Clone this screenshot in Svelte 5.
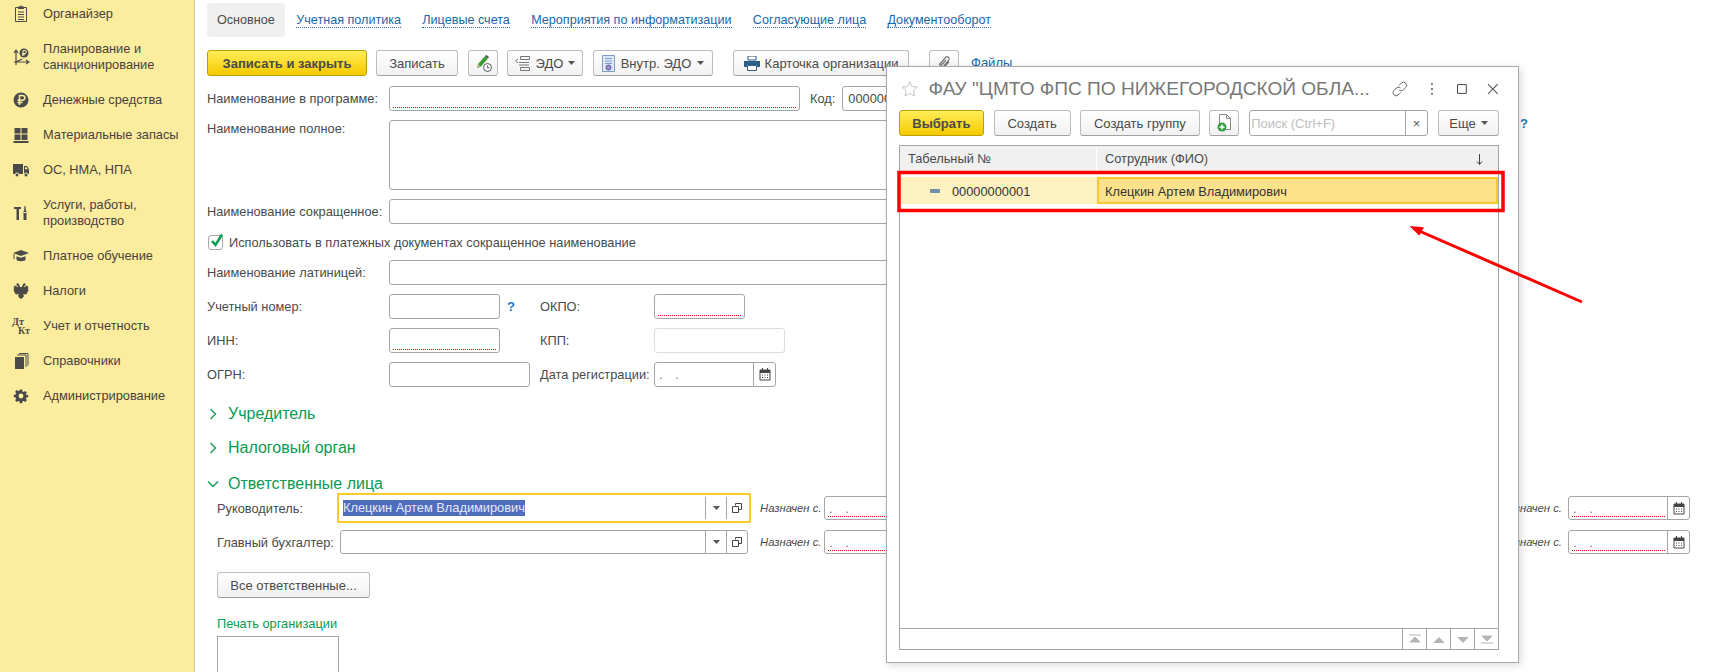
<script>
    const menu = [
        { id: 'org', lines: ['Органайзер'] },
        { id: 'plan', lines: ['Планирование и', 'санкционирование'] },
        { id: 'rub', lines: ['Денежные средства'] },
        { id: 'mat', lines: ['Материальные запасы'] },
        { id: 'truck', lines: ['ОС, НМА, НПА'] },
        { id: 'tools', lines: ['Услуги, работы,', 'производство'] },
        { id: 'cap', lines: ['Платное обучение'] },
        { id: 'tax', lines: ['Налоги'] },
        { id: 'dtkt', lines: ['Учет и отчетность'] },
        { id: 'books', lines: ['Справочники'] },
        { id: 'gear', lines: ['Администрирование'] }
    ]

    const tabs = [
        'Учетная политика',
        'Лицевые счета',
        'Мероприятия по информатизации',
        'Согласующие лица',
        'Документооборот'
    ]
</script>

{#snippet caret()}
    <svg class="caret" width="7" height="4" viewBox="0 0 7 4"><path d="M0 0h7L3.5 4z" fill="#555" /></svg>
{/snippet}

{#snippet calendar()}
    <svg width="12" height="13" viewBox="0 0 12 13">
        <path d="M1 2h10v10H1z" fill="none" stroke="#444" />
        <path d="M1 2h10v3H1zM3 0h1v3H3zM8 0h1v3H8z" fill="#444" />
        <path d="M3 6.500h1v1H3zM5.500 6.500h1v1h-1zM8 6.500h1v1H8zM3 9h1v1H3zM5.500 9h1v1h-1zM8 9h1v1H8z" fill="#444" />
    </svg>
{/snippet}

{#snippet date(width)}
    <div class="field req date" style="width: {width}px">
        <span class="mask">  .   .</span>
        <span class="side">{@render calendar()}</span>
    </div>
{/snippet}

{#snippet pick()}
    <span class="pick"><svg width="7" height="4" viewBox="0 0 7 4"><path d="M0 0h7L3.500 4z" fill="#555" /></svg></span>
    <span class="pick">
        <svg width="10" height="10" viewBox="0 0 10 10">
            <path d="M3.500 2.500V.5h6v6H7M.5 3.500h6v6h-6z" fill="none" stroke="#444" />
        </svg>
    </span>
{/snippet}

<div class="app">
    <aside class="side-menu">
        {#each menu as item}
            <div class="menu-item">
                <svg class="menu-icon" width="18" height="18" viewBox="0 0 18 18" fill="#4a4a4a">
                    {#if item.id === 'org'}
                        <path d="M3.500 2.500h11v14h-11z" fill="none" stroke="#4a4a4a" />
                        <path d="M6 1.500h2L9 0l1 1.500h2V4H6zM6 6.500h6v1H6zM6 9h6v1H6zM6 11.500h6v1H6zM6 14h6v1H6z" />
                    {:else if item.id === 'plan'}
                        <path d="M4 17V3M2 5l2-3 2 3M2 14h14M14 12l3 2-3 2M4 14l6-3" fill="none" stroke="#4a4a4a" stroke-width="1.200" />
                        <circle cx="12" cy="5" r="4.500" />
                        <path d="M11 8V2.500h2a1.400 1.400 0 010 2.900h-3M10 6.700h3" fill="none" stroke="#fbec9e" />
                    {:else if item.id === 'rub'}
                        <circle cx="9" cy="9" r="7.500" />
                        <path d="M7.500 14V4.500h3a2.300 2.300 0 010 4.700H5.500M5.500 11.500h5" fill="none" stroke="#fbec9e" stroke-width="1.500" />
                    {:else if item.id === 'mat'}
                        <path d="M2.500 2h6v5.500h-6zM9.500 2h6v5.500h-6zM2.500 8.500h6V14h-6zM9.500 8.500h6V14h-6zM1.500 15h15v2h-15z" />
                    {:else if item.id === 'truck'}
                        <path d="M1 3h10v10H1zM12 5h3l2 3.500V13h-5z" />
                        <circle cx="5" cy="14" r="2" stroke="#fbec9e" />
                        <circle cx="14" cy="14" r="2" stroke="#fbec9e" />
                        <path d="M13 6.200h1.600l1.100 2H13z" fill="#fbec9e" />
                    {:else if item.id === 'tools'}
                        <path d="M2 3h7v2H7v11H4.500V5H2zM12.500 2h1l.4 5h.6v9h-3V7h.6z" />
                        <path d="M11.500 8.500h3" stroke="#fbec9e" />
                    {:else if item.id === 'cap'}
                        <path d="M9 3l8 3-8 3-8-3zM4.500 9.200L9 10.800l4.500-1.600V13c-1 1.500-8 1.500-9 0zM1.500 7h1v5h-1z" />
                    {:else if item.id === 'tax'}
                        <path d="M5 1l2 1 .5 2L9 5.500 10.500 4l.5-2 2-1 .5 2-1.500 1.500.5 1 1.500-2 .5.500 1-.5.500 2 .5 0-.5 2 .5 1-1 1.500-.500 1.500-1.500 1L11 12l1 2-1.500 2-1.500 1-1.500-1L6 14l1-2-2.500.5-1.500-1L2.500 10l-1-1.500.5-1-.5-2 .5 0 .5-2 1 .5.500-.5 1.500 2 .5-1L4.500 3z" />
                    {:else if item.id === 'dtkt'}
                        <text x="0" y="8" class="dt">Дт</text>
                        <text x="6" y="16.500" class="dt">Кт</text>
                    {:else if item.id === 'books'}
                        <path d="M3 5h9v12H3z" />
                        <path d="M5 3h9v12M7 1.500h9v12" fill="none" stroke="#4a4a4a" />
                    {:else}
                        <g transform="translate(1.800 1.800) scale(.8)">
                            <path d="M7.500 1h3l.4 2.300 1.400.6 2-1.300 2.100 2.100-1.300 2 .6 1.400L18 7.500v3l-2.300.4-.6 1.400 1.300 2-2.100 2.100-2-1.300-1.400.6-.4 2.300h-3l-.4-2.300-1.400-.6-2 1.300L1.600 14.300l1.300-2-.6-1.400L0 10.500v-3l2.300-.4.6-1.400-1.300-2L3.700 1.600l2 1.300 1.400-.6zM9 6a3 3 0 100 6 3 3 0 000-6z" fill-rule="evenodd" />
                        </g>
                    {/if}
                </svg>
                <div class="menu-text">
                    {#each item.lines as line}<div>{line}</div>{/each}
                </div>
            </div>
        {/each}
    </aside>

    <main class="form">
        <nav class="tabs">
            <span class="tab active">Основное</span>
            {#each tabs as tab}<span class="tab"><span class="link">{tab}</span></span>{/each}
        </nav>

        <div class="toolbar">
            <button class="btn primary main-save">Записать и закрыть</button>
            <button class="btn save">Записать</button>
            <button class="btn icon-btn">
                <svg width="19" height="19" viewBox="0 0 19 19">
                    <path d="M3 14l1-4 7-8 3 2.500-7 8z" fill="#3f9a3b" />
                    <path d="M3 14l1-4 2 2z" fill="#d9b48a" />
                    <path d="M11 2l1.500-1L15 3l-1 1.500z" fill="#555" />
                    <circle cx="13.500" cy="13.500" r="4" fill="#fff" stroke="#555" />
                    <path d="M13.500 11.500v2.200h2" fill="none" stroke="#555" />
                </svg>
            </button>
            <button class="btn edo">
                <svg width="16" height="15" viewBox="0 0 16 15" fill="none" stroke="#777">
                    <path d="M5.500.5h9v3h-9zM4 6.500h10M4 9h10M5.500 11.500h9v3h-9zM3 3L.5 5 3 7" />
                </svg>
                <span>ЭДО</span>{@render caret()}
            </button>
            <button class="btn inner-edo">
                <svg width="13" height="17" viewBox="0 0 13 17">
                    <path d="M.5.5h12v16H.5z" fill="#dfe9f5" stroke="#7f9cc4" />
                    <path d="M3 3.500h7M3 6h7M3 8.500h7" stroke="#7f9cc4" />
                    <circle cx="6.500" cy="12.500" r="2.500" fill="#9a8fd0" stroke="#5a5a9a" />
                </svg>
                <span>Внутр. ЭДО</span>{@render caret()}
            </button>
            <button class="btn card">
                <svg width="16" height="15" viewBox="0 0 16 15">
                    <path d="M4 0h8v4H4z" fill="none" stroke="#2e5f87" />
                    <path d="M0 5h16v6h-3V9H3v2H0z" fill="#2e5f87" />
                    <path d="M3.500 9.500h9v5h-9z" fill="#fff" stroke="#2e5f87" />
                </svg>
                <span>Карточка организации</span>
            </button>
            <button class="btn clip">
                <svg width="16" height="17" viewBox="0 0 16 17" fill="none" stroke="#777" stroke-width="1.200">
                    <path d="M3 10l6.500-7.500c2-2 5 .5 3 3L6 13c-1.200 1.300-3-.2-2-1.500L10 5M1.500 11.500c-1 2 .5 4.500 3.500 3.500l8-8" />
                </svg>
            </button>
            <span class="link files">Файлы</span>
        </div>

        <div class="row first-row">
            <span class="label">Наименование в программе:</span>
            <div class="field req" style="width: 411px"></div>
            <span class="code-label">Код:</span>
            <div class="field code">000000000</div>
        </div>
        <div class="row">
            <span class="label top">Наименование полное:</span>
            <div class="field wide tall"></div>
        </div>
        <div class="row">
            <span class="label">Наименование сокращенное:</span>
            <div class="field wide"></div>
        </div>
        <label class="check-row">
            <span class="check">
                <svg width="16" height="16" viewBox="0 0 16 16"><path d="M3 8l3.500 4L13 1.500" fill="none" stroke="#0a9a50" stroke-width="2.500" /></svg>
            </span>
            Использовать в платежных документах сокращенное наименование
        </label>
        <div class="row">
            <span class="label">Наименование латиницей:</span>
            <div class="field wide"></div>
        </div>
        <div class="row">
            <span class="label">Учетный номер:</span>
            <div class="cell">
                <div class="field" style="width: 111px"></div>
                <span class="hint">?</span>
            </div>
            <span class="label second">ОКПО:</span>
            <div class="field req" style="width: 91px"></div>
        </div>
        <div class="row">
            <span class="label">ИНН:</span>
            <div class="cell"><div class="field req" style="width: 111px"></div></div>
            <span class="label second">КПП:</span>
            <div class="field off" style="width: 131px"></div>
        </div>
        <div class="row">
            <span class="label">ОГРН:</span>
            <div class="cell"><div class="field" style="width: 141px"></div></div>
            <span class="label second">Дата регистрации:</span>
            <div class="field date" style="width: 122px">
                <span class="mask">  .   .</span>
                <span class="side">{@render calendar()}</span>
            </div>
        </div>

        <h3 class="group closed first">
            <svg width="8" height="12" viewBox="0 0 8 12"><path d="M1.500 1l5 5-5 5" fill="none" stroke="#0a9a50" stroke-width="1.300" /></svg>
            Учредитель
        </h3>
        <h3 class="group closed">
            <svg width="8" height="12" viewBox="0 0 8 12"><path d="M1.500 1l5 5-5 5" fill="none" stroke="#0a9a50" stroke-width="1.300" /></svg>
            Налоговый орган
        </h3>
        <h3 class="group open">
            <svg width="12" height="8" viewBox="0 0 12 8"><path d="M1 1.500l5 5 5-5" fill="none" stroke="#0a9a50" stroke-width="1.300" /></svg>
            Ответственные лица
        </h3>

        <div class="people">
            <div class="person">
                <span class="person-label">Руководитель:</span>
                <div class="field chooser focus">
                    <span class="selected">Клецкин Артем Владимирович</span>
                    {@render pick()}
                </div>
                <span class="since">Назначен с.</span>
                {@render date(122)}
                <span class="since far">Назначен с.</span>
                {@render date(122)}
            </div>
            <div class="person">
                <span class="person-label">Главный бухгалтер:</span>
                <div class="field chooser">
                    <span class="selected-empty"></span>
                    {@render pick()}
                </div>
                <span class="since">Назначен с.</span>
                {@render date(122)}
                <span class="since far">Назначен с.</span>
                {@render date(122)}
            </div>
            <button class="btn all">Все ответственные...</button>
            <div class="stamp-title">Печать организации</div>
            <div class="stamp"></div>
        </div>
    </main>

    <span class="hint outer">?</span>

    <section class="dialog">
        <header class="dialog-head">
            <svg width="18" height="18" viewBox="0 0 18 18"><path d="M9 1.500l2.300 5 5.400.6-4 3.700 1.100 5.400L9 13.500l-4.800 2.700 1.100-5.400-4-3.700 5.400-.6z" fill="none" stroke="#c4c4c4" /></svg>
            <h2>ФАУ "ЦМТО ФПС ПО НИЖЕГОРОДСКОЙ ОБЛА...</h2>
            <svg class="h-link" width="16" height="16" viewBox="0 0 16 16" fill="none" stroke="#666">
                <path d="M7 4.500l2.500-2.500a3 3 0 014.500 4.500L11.500 9a3 3 0 01-4 .2M9 11.500L6.500 14A3 3 0 012 9.500L4.500 7a3 3 0 014-.2" />
            </svg>
            <svg class="h-dots" width="4" height="12" viewBox="0 0 4 12" fill="#777"><path d="M1 0h2v2H1zM1 5h2v2H1zM1 10h2v2H1z" /></svg>
            <svg class="h-max" width="10" height="10" viewBox="0 0 10 10"><path d="M.5.5h9v9h-9z" fill="none" stroke="#444" /></svg>
            <svg class="h-close" width="12" height="12" viewBox="0 0 12 12"><path d="M1 1l10 10M11 1L1 11" stroke="#555" stroke-width="1.100" /></svg>
        </header>

        <div class="dialog-bar">
            <button class="btn primary choose">Выбрать</button>
            <button class="btn create">Создать</button>
            <button class="btn group-btn">Создать группу</button>
            <button class="btn icon-btn copy">
                <svg width="15" height="18" viewBox="0 0 15 18">
                    <path d="M2.500.5h7l4 4v11h-11z" fill="#fff" stroke="#888" />
                    <path d="M9.500.5v4h4" fill="none" stroke="#888" />
                    <circle cx="5" cy="13" r="4.500" fill="#2f9e3f" />
                    <path d="M5 10.500v5M2.500 13h5" stroke="#fff" stroke-width="1.500" />
                </svg>
            </button>
            <div class="field search">
                <span>Поиск (Ctrl+F)</span>
                <span class="side small">×</span>
            </div>
            <button class="btn more">Еще {@render caret()}</button>
        </div>

        <div class="grid">
            <div class="grid-head">
                <span class="col-a">Табельный №</span>
                <span class="col-b">
                    Сотрудник (ФИО)
                    <svg class="sort" width="7" height="11" viewBox="0 0 7 11"><path d="M3.500 0v10M1 7.500L3.500 10.500 6 7.500" fill="none" stroke="#444" /></svg>
                </span>
            </div>
            <div class="grid-row">
                <span class="cell-a"><i class="dash"></i>00000000001</span>
                <span class="cell-b">Клецкин Артем Владимирович</span>
            </div>
            <div class="grid-body"></div>
            <div class="pager">
                {#each ['M2 2h12M3 9l5-5 5 5z', 'M3 9.500l5-5 5 5z', 'M3 4.500l5 5 5-5z', 'M3 3l5 5 5-5zM2 10h12'] as d}
                    <span class="page-btn">
                        <svg width="16" height="12" viewBox="0 0 16 12"><path {d} fill="#b4b4b4" stroke="#b4b4b4" /></svg>
                    </span>
                {/each}
            </div>
        </div>
    </section>

    <svg class="marks" width="1714" height="672" viewBox="0 0 1714 672">
        <rect x="899" y="172.500" width="604" height="38" fill="none" stroke="#f00" stroke-width="3.500" />
        <path d="M1582 302L1417 230" stroke="#f00" stroke-width="3" />
        <path d="M1409.500 226L1424 227.300 1419.300 235.700z" fill="#f00" />
    </svg>
</div>

<style>
    :global(body) {
        margin: 0;
        background: #fff;
    }

    .app {
        position: relative;
        display: flex;
        width: 1714px;
        height: 672px;
        overflow: hidden;
        font-family: 'Liberation Sans', Arial, sans-serif;
        font-size: 12.800px;
        color: #4a4a4a;
    }

    button {
        font: inherit;
        color: inherit;
    }

    /* left menu */
    .side-menu {
        flex: 0 0 194px;
        background: #fbec9e;
        border-right: 1px solid #d3cb9c;
    }

    .menu-item {
        display: flex;
        align-items: center;
        gap: 13px;
        padding: 9.500px 0 9.500px 12px;
        line-height: 16px;
        color: #4a3f3f;
    }

    .menu-item:first-child {
        margin-top: -4px;
    }

    .menu-icon {
        flex: none;
        margin: -1px 0;
    }

    .dt {
        font: bold 10px 'Liberation Serif', serif;
    }

    /* form */
    .form {
        flex: 1;
        min-width: 0;
        padding: 3px 0 0 12px;
    }

    .tabs {
        display: flex;
        gap: 1.300px;
        height: 34px;
        font-size: 12.600px;
    }

    .tab {
        display: flex;
        align-items: center;
        padding: 0 10px;
        border-radius: 3px;
    }

    .tab.active {
        width: 58px;
        background: #f0f0f0;
    }

    .link {
        color: #1a66a8;
        border-bottom: 1px dotted #1a66a8;
        line-height: 14px;
    }

    .toolbar {
        display: flex;
        align-items: stretch;
        height: 26px;
        margin-top: 13px;
        font-size: 13px;
    }

    .btn {
        display: inline-flex;
        align-items: center;
        justify-content: center;
        gap: 5px;
        box-sizing: border-box;
        height: 26px;
        padding: 0;
        border: 1px solid #bdbdbd;
        border-bottom-color: #a0a0a0;
        border-radius: 3px;
        background: linear-gradient(#fff, #f1f1f1);
        white-space: nowrap;
    }

    .btn.primary {
        background: linear-gradient(#ffee58, #f5c900);
        border-color: #b9a100;
        font-weight: bold;
    }

    .main-save { width: 160px; margin-right: 9px; }
    .save { width: 82px; margin-right: 10px; }
    .icon-btn { width: 30px; margin-right: 9px; }
    .edo { width: 76px; margin-right: 10px; }
    .inner-edo { width: 120px; margin-right: 20px; gap: 6px; }
    .card { width: 176px; margin-right: 20px; }
    .clip { width: 30px; margin-right: 12px; }

    .files {
        align-self: center;
    }

    .caret {
        flex: none;
    }

    .row {
        display: flex;
        align-items: center;
        margin-top: 9px;
    }

    .first-row {
        margin-top: 10px;
    }

    .label {
        flex: 0 0 182px;
    }

    .label.top {
        align-self: flex-start;
        margin-top: 1px;
    }

    .label.second {
        flex-basis: 114px;
    }

    .cell {
        display: flex;
        align-items: center;
        flex: 0 0 151px;
    }

    .field {
        position: relative;
        display: flex;
        align-items: center;
        flex: none;
        box-sizing: border-box;
        height: 25px;
        border: 1px solid #a6a6a6;
        border-radius: 3px;
        background: #fff;
    }

    .field.wide {
        width: 1120px;
    }

    .field.tall {
        height: 70px;
    }

    .field.off {
        border-color: #dcdcdc;
    }

    .field.req::after {
        content: '';
        position: absolute;
        left: 3px;
        right: 3px;
        bottom: 2px;
        border-bottom: 1px dotted #e00000;
    }

    .field.date.req::after {
        right: 24px;
    }

    .code-label {
        margin: 0 7px 0 10px;
    }

    .field.code {
        width: 110px;
        padding-left: 5px;
    }

    .hint {
        margin-left: 7px;
        color: #1a7abf;
        font-weight: bold;
        font-size: 13px;
    }

    .hint.outer {
        position: absolute;
        left: 1520px;
        top: 116px;
        margin: 0;
    }

    .mask {
        flex: 1;
        padding-left: 4px;
        white-space: pre;
        letter-spacing: 0.500px;
        color: #777;
    }

    .side {
        display: flex;
        align-items: center;
        justify-content: center;
        align-self: stretch;
        width: 21px;
        border-left: 1px solid #a6a6a6;
    }

    .side.small {
        color: #555;
    }

    .check-row {
        display: flex;
        align-items: center;
        gap: 6px;
        height: 18px;
        margin-top: 9px;
        margin-left: 1px;
    }

    .check {
        box-sizing: border-box;
        width: 15px;
        height: 15px;
        border: 1px solid #a6a6a6;
        border-radius: 3px;
        line-height: 0;
    }

    .check svg {
        margin-top: -3px;
    }

    .group {
        display: flex;
        align-items: center;
        gap: 11px;
        height: 24px;
        margin: 10px 0 0;
        padding-left: 2px;
        font-size: 16px;
        font-weight: normal;
        color: #0a9a50;
    }

    .group.first {
        margin-top: 15px;
    }

    .group.open {
        gap: 9px;
        margin-top: 12px;
        padding-left: 0;
    }

    .people {
        padding-left: 10px;
    }

    .person {
        display: flex;
        align-items: center;
        height: 24px;
        margin-bottom: 10px;
    }

    .person-label {
        flex: 0 0 123px;
    }

    .field.chooser {
        width: 408px;
        height: 24px;
        padding-left: 2px;
    }

    .field.focus {
        border-color: transparent;
        outline: 2px solid #fbc92a;
        outline-offset: 1px;
        border-radius: 0;
    }

    .selected {
        background: #4f6cbe;
        color: #e4e9f7;
        line-height: 16px;
        margin-right: auto;
    }

    .selected-empty {
        margin-right: auto;
    }

    .pick {
        display: flex;
        align-items: center;
        justify-content: center;
        align-self: stretch;
        width: 20px;
        border-left: 1px solid #a6a6a6;
    }

    .since {
        flex: none;
        width: 64px;
        margin-left: 12px;
        font-size: 11.300px;
        font-style: italic;
    }

    .since.far {
        margin-left: 552px;
        text-align: right;
        padding-right: 6px;
    }

    .person .field.date {
        height: 24px;
    }

    .btn.all {
        display: flex;
        width: 153px;
        margin-top: 18px;
        font-size: 13px;
    }

    .stamp-title {
        margin-top: 18px;
        line-height: 16px;
        color: #0a9a50;
    }

    .stamp {
        box-sizing: border-box;
        width: 122px;
        height: 80px;
        margin-top: 4px;
        border: 1px solid #a6a6a6;
    }

    /* dialog */
    .dialog {
        position: absolute;
        left: 886px;
        top: 66px;
        box-sizing: border-box;
        display: flex;
        flex-direction: column;
        width: 633px;
        height: 597px;
        padding: 0 19px 12px 12px;
        background: #fff;
        border: 1px solid #a9a9a9;
        box-shadow: 2px 2px 8px rgba(0, 0, 0, 0.15);
        font-size: 13px;
    }

    .dialog-head {
        display: flex;
        align-items: center;
        height: 43px;
        padding-left: 2px;
    }

    .dialog-head h2 {
        width: 474px;
        margin: 0 0 0 10px;
        font-size: 19.100px;
        font-weight: normal;
        color: #787878;
        white-space: nowrap;
    }

    .h-dots { margin-left: 22px; }
    .h-max { margin-left: 24px; }
    .h-close { margin-left: 20px; }

    .dialog-bar {
        display: flex;
    }

    .choose { width: 85px; margin-right: 10px; }
    .create { width: 77px; margin-right: 9px; }
    .group-btn { width: 121px; margin-right: 9px; }
    .copy { margin-right: 10px; }

    .field.search {
        width: 179px;
        height: 26px;
        padding-left: 1px;
        color: #bdbdbd;
        margin-right: 10px;
    }

    .field.search > span:first-child {
        flex: 1;
    }

    .more { width: 61px; }

    .grid {
        display: flex;
        flex-direction: column;
        flex: 1;
        margin-top: 9px;
        border: 1px solid #a6a6a6;
        font-size: 12.800px;
    }

    .grid-head {
        display: flex;
        box-sizing: border-box;
        height: 25px;
        padding-top: 1px;
        background: #f0f0f0;
        line-height: 24px;
    }

    .col-a {
        box-sizing: border-box;
        width: 197px;
        padding-left: 8px;
        border-right: 1px solid #fff;
    }

    .col-b {
        flex: 1;
        display: flex;
        align-items: center;
        justify-content: space-between;
        padding: 0 15px 0 8px;
    }

    .grid-row {
        display: flex;
        height: 27px;
        margin-top: 6px;
        color: #333;
    }

    .cell-a {
        box-sizing: border-box;
        display: flex;
        align-items: center;
        width: 197px;
        padding: 1px 0 0 30px;
        background: #fdf1c0;
    }

    .dash {
        width: 10px;
        height: 4px;
        margin-right: 12px;
        background: #6f8fa8;
        border-radius: 1px;
    }

    .cell-b {
        flex: 1;
        box-sizing: border-box;
        padding-left: 6px;
        background: #fde28c;
        border: 2px solid #f9c82b;
        line-height: 25px;
    }

    .grid-body {
        flex: 1;
    }

    .pager {
        display: flex;
        justify-content: flex-end;
        height: 20px;
        border-top: 1px solid #a6a6a6;
    }

    .page-btn {
        display: flex;
        align-items: center;
        justify-content: center;
        width: 23px;
        border-left: 1px solid #a6a6a6;
    }

    .marks {
        position: absolute;
        left: 0;
        top: 0;
        pointer-events: none;
    }
</style>
